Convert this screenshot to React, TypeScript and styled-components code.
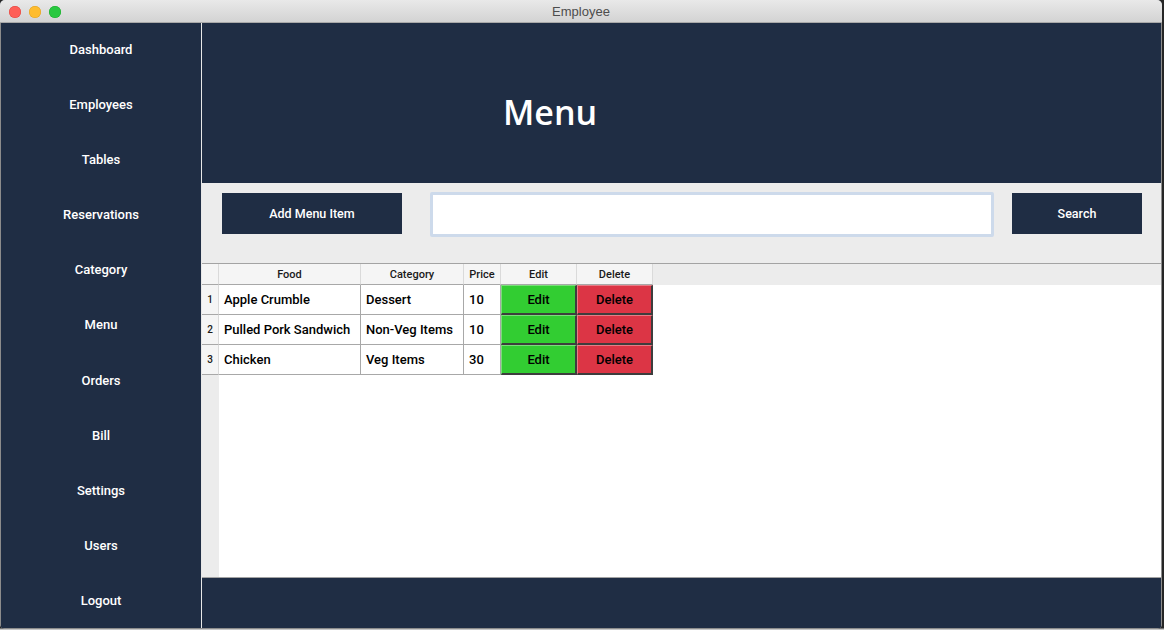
import React from "react";
import styled, { createGlobalStyle } from "styled-components";

const NAVY = "#1f2d44";

const Global = createGlobalStyle`
  html, body { margin: 0; padding: 0; }
  body {
    width: 1164px;
    height: 630px;
    overflow: hidden;
    background: #262626;
    font-family: Roboto, "Liberation Sans", Arial, sans-serif;
  }
`;

const Desktop = styled.div`
  width: 1164px;
  height: 630px;
  background: linear-gradient(to bottom, #262626 0, #262626 628px, #bdbdbd 629px, #d0d0d0 630px);
`;

const Window = styled.div`
  width: 1162px;
  height: 629px;
  border-radius: 5px;
  overflow: hidden;
  display: flex;
  flex-direction: column;
  background: ${NAVY};
  box-shadow: inset 0 0 0 1px #8c8c8c;
`;

const TitleBar = styled.div`
  position: relative;
  height: 23px;
  flex: none;
  box-sizing: border-box;
  padding-top: 1px;
  display: flex;
  align-items: center;
  justify-content: center;
  background: linear-gradient(to bottom, #e9e9e9, #d3d3d3);
  border-bottom: 1px solid #a9a9a9;
`;

const Lights = styled.div`
  position: absolute;
  left: 9px;
  top: 6px;
  display: flex;
  gap: 8px;
`;

const Light = styled.span<{ $c: string; $b: string }>`
  width: 12px;
  height: 12px;
  border-radius: 50%;
  background: ${(p) => p.$c};
  box-shadow: inset 0 0 0 0.5px ${(p) => p.$b};
`;

const Title = styled.span`
  font-family: "Liberation Sans", Arial, sans-serif;
  font-size: 13px;
  color: #4d4d4d;
`;

const Body = styled.div`
  flex: 1;
  display: flex;
  min-height: 0;
  padding: 0 1px 1px 1px;
  background: #8c8c8c;
`;

const Sidebar = styled.nav`
  width: 200px;
  flex: none;
  background: ${NAVY};
  border-right: 1px solid #e8e8e8;
  display: flex;
  flex-direction: column;
`;

const NavItem = styled.div`
  height: 55.1px;
  flex: none;
  box-sizing: border-box;
  padding-top: 19px;
  text-align: center;
  color: #ffffff;
  font-size: 13px;
  font-weight: 500;
  line-height: 15px;
`;

const Main = styled.main`
  flex: 1;
  display: flex;
  flex-direction: column;
  min-width: 0;
`;

const Header = styled.header`
  height: 160px;
  flex: none;
  background: ${NAVY};
  display: flex;
  align-items: center;
  box-sizing: border-box;
  padding: 17px 0 0 301px;
`;

const HeaderTitle = styled.h1`
  margin: 0;
  color: #ffffff;
  font-family: "Open Sans", "Noto Sans", sans-serif;
  font-weight: 600;
  font-size: 34px;
  line-height: 1;
`;

const Toolbar = styled.div`
  height: 80px;
  flex: none;
  box-sizing: border-box;
  background: #ececec;
  display: flex;
  align-items: flex-start;
  padding: 10px 19px 0 20px;
`;

const DarkButton = styled.button<{ $w: number }>`
  width: ${(p) => p.$w}px;
  height: 41px;
  flex: none;
  border: none;
  background: ${NAVY};
  color: #ffffff;
  font-family: Roboto, "Liberation Sans", Arial, sans-serif;
  font-weight: 500;
  font-size: 12.5px;
  padding: 0;
`;

const SearchInput = styled.input`
  flex: 1;
  min-width: 0;
  height: 45px;
  box-sizing: border-box;
  margin: -1px 18px 0 28px;
  border: 3px solid #cddaeb;
  border-radius: 2px;
  background: #ffffff;
  outline: none;
`;

const TableArea = styled.section`
  flex: 1;
  min-height: 0;
  display: flex;
  flex-direction: column;
  border-top: 1px solid #a3a3a3;
  border-bottom: 1px solid #a3a3a3;
  background: linear-gradient(to right, #ececec 0, #ececec 17px, #ffffff 17px);
`;

const HeadRow = styled.div`
  display: flex;
  background: #ececec;
  height: 21px;
  flex: none;
`;

const Row = styled.div`
  display: flex;
  height: 30px;
  flex: none;
`;

const HeadCell = styled.div<{ $w: number }>`
  width: ${(p) => p.$w}px;
  flex: none;
  box-sizing: border-box;
  background: #f5f5f5;
  border-right: 1px solid #dadada;
  border-bottom: 1px solid #a8a8a8;
  display: flex;
  align-items: center;
  justify-content: center;
  font-size: 11px;
  font-weight: 500;
  color: #1a1a1a;
`;

const NumCell = styled.div`
  width: 17px;
  flex: none;
  box-sizing: border-box;
  background: #f5f5f5;
  border-right: 1px solid #dadada;
  border-bottom: 1px solid #a8a8a8;
  display: flex;
  align-items: center;
  justify-content: center;
  font-size: 10px;
  font-weight: 500;
  color: #1a1a1a;
`;

const Cell = styled.div<{ $w: number }>`
  width: ${(p) => p.$w}px;
  flex: none;
  box-sizing: border-box;
  background: #ffffff;
  border-right: 1px solid #a8a8a8;
  border-bottom: 1px solid #a8a8a8;
  display: flex;
  align-items: center;
  padding-left: 5px;
  font-size: 13px;
  font-weight: 500;
  color: #000000;
  white-space: nowrap;
  overflow: hidden;
`;

const ActionCell = styled.div<{ $bg: string }>`
  width: 76px;
  flex: none;
  box-sizing: border-box;
  background: ${(p) => p.$bg};
  border-style: solid;
  border-width: 1px 2px 2px 1px;
  border-color: rgba(255, 255, 255, 0.35) #3d3d3d #3d3d3d rgba(255, 255, 255, 0.35);
  display: flex;
  align-items: center;
  justify-content: center;
  font-size: 13px;
  font-weight: 500;
  color: #000000;
`;

const Footer = styled.footer`
  height: 50px;
  flex: none;
  background: ${NAVY};
`;

const navItems = [
  "Dashboard",
  "Employees",
  "Tables",
  "Reservations",
  "Category",
  "Menu",
  "Orders",
  "Bill",
  "Settings",
  "Users",
  "Logout",
];

const rows = [
  { food: "Apple Crumble", category: "Dessert", price: "10" },
  { food: "Pulled Pork Sandwich", category: "Non-Veg Items", price: "10" },
  { food: "Chicken", category: "Veg Items", price: "30" },
];

export default function App() {
  return (
    <>
      <Global />
      <Desktop>
        <Window>
          <TitleBar>
            <Lights>
              <Light $c="#fe5f57" $b="#e0443e" />
              <Light $c="#febc2e" $b="#dea123" />
              <Light $c="#28c840" $b="#1aab29" />
            </Lights>
            <Title>Employee</Title>
          </TitleBar>
          <Body>
            <Sidebar>
              {navItems.map((n) => (
                <NavItem key={n}>{n}</NavItem>
              ))}
            </Sidebar>
            <Main>
              <Header>
                <HeaderTitle>Menu</HeaderTitle>
              </Header>
              <Toolbar>
                <DarkButton $w={180}>Add Menu Item</DarkButton>
                <SearchInput />
                <DarkButton $w={130}>Search</DarkButton>
              </Toolbar>
              <TableArea>
                <HeadRow>
                  <NumCell />
                  <HeadCell $w={142}>Food</HeadCell>
                  <HeadCell $w={103}>Category</HeadCell>
                  <HeadCell $w={37}>Price</HeadCell>
                  <HeadCell $w={76}>Edit</HeadCell>
                  <HeadCell $w={76}>Delete</HeadCell>
                </HeadRow>
                {rows.map((r, i) => (
                  <Row key={r.food}>
                    <NumCell>{i + 1}</NumCell>
                    <Cell $w={142}>{r.food}</Cell>
                    <Cell $w={103}>{r.category}</Cell>
                    <Cell $w={37}>{r.price}</Cell>
                    <ActionCell $bg="#32cd32">Edit</ActionCell>
                    <ActionCell $bg="#dc3545">Delete</ActionCell>
                  </Row>
                ))}
              </TableArea>
              <Footer />
            </Main>
          </Body>
        </Window>
      </Desktop>
    </>
  );
}
